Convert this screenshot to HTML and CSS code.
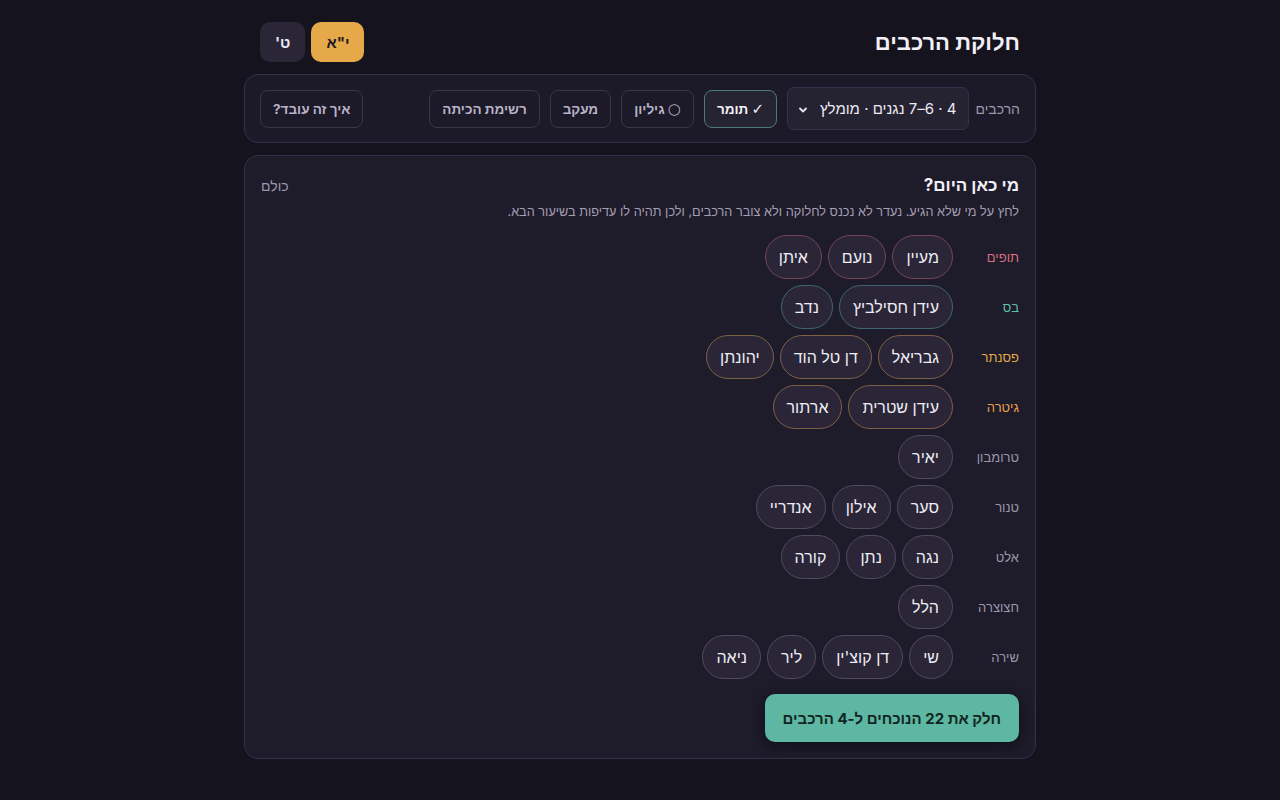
FILE: index.html
```html
<!DOCTYPE html>
<html lang="he" dir="rtl">
<head>
    <meta charset="UTF-8">
    <meta name="viewport" content="width=device-width, initial-scale=1.0">
    <title>חלוקת הרכבים</title>
    <link rel="stylesheet" href="styles.css">
</head>
<body>
    <div class="page">
        <header class="header">
            <h1>חלוקת הרכבים</h1>
            <div class="grades">
                <button class="grade active">י"א</button>
                <button class="grade">ט'</button>
            </div>
        </header>

        <div class="toolbar">
            <span class="toolbar-label">הרכבים</span>
            <div class="select">
                <span>4 · 6–7 נגנים · מומלץ</span>
                <svg width="10" height="10" viewBox="0 0 10 10"><path d="M2 3.5 L5 6.5 L8 3.5" fill="none" stroke="#e8e6f0" stroke-width="1.8" stroke-linecap="round" stroke-linejoin="round"/></svg>
            </div>
            <button class="tool active"><span class="mark">✓</span> תומר</button>
            <button class="tool"><span class="mark">○</span> גיליון</button>
            <button class="tool">מעקב</button>
            <button class="tool">רשימת הכיתה</button>
            <button class="tool help">איך זה עובד?</button>
        </div>

        <section class="card">
            <div class="card-head">
                <h2>מי כאן היום?</h2>
                <span class="all">כולם</span>
            </div>
            <p class="hint">לחץ על מי שלא הגיע. נעדר לא נכנס לחלוקה ולא צובר הרכבים, ולכן תהיה לו עדיפות בשיעור הבא.</p>

            <div class="rows">
                <div class="row drums">
                    <span class="row-label">תופים</span>
                    <div class="chips">
                        <button class="chip">מעיין</button>
                        <button class="chip">נועם</button>
                        <button class="chip">איתן</button>
                    </div>
                </div>
                <div class="row bass">
                    <span class="row-label">בס</span>
                    <div class="chips">
                        <button class="chip">עידן חסילביץ</button>
                        <button class="chip">נדב</button>
                    </div>
                </div>
                <div class="row piano">
                    <span class="row-label">פסנתר</span>
                    <div class="chips">
                        <button class="chip">גבריאל</button>
                        <button class="chip">דן טל הוד</button>
                        <button class="chip">יהונתן</button>
                    </div>
                </div>
                <div class="row guitar">
                    <span class="row-label">גיטרה</span>
                    <div class="chips">
                        <button class="chip">עידן שטרית</button>
                        <button class="chip">ארתור</button>
                    </div>
                </div>
                <div class="row">
                    <span class="row-label">טרומבון</span>
                    <div class="chips">
                        <button class="chip">יאיר</button>
                    </div>
                </div>
                <div class="row">
                    <span class="row-label">טנור</span>
                    <div class="chips">
                        <button class="chip">סער</button>
                        <button class="chip">אילון</button>
                        <button class="chip">אנדריי</button>
                    </div>
                </div>
                <div class="row">
                    <span class="row-label">אלט</span>
                    <div class="chips">
                        <button class="chip">נגה</button>
                        <button class="chip">נתן</button>
                        <button class="chip">קורה</button>
                    </div>
                </div>
                <div class="row">
                    <span class="row-label">חצוצרה</span>
                    <div class="chips">
                        <button class="chip">הלל</button>
                    </div>
                </div>
                <div class="row">
                    <span class="row-label">שירה</span>
                    <div class="chips">
                        <button class="chip">שי</button>
                        <button class="chip">דן קוצ'ין</button>
                        <button class="chip">ליר</button>
                        <button class="chip">ניאה</button>
                    </div>
                </div>
            </div>

            <div class="actions">
                <button class="split">חלק את 22 הנוכחים ל-4 הרכבים</button>
            </div>
        </section>
    </div>
</body>
</html>
```

FILE: styles.css
```css
body {
    margin: 0;
    background-color: #15131e;
    color: #e8e6f0;
    font-family: Inter, "Noto Sans", sans-serif;
}

button {
    font-family: inherit;
    cursor: pointer;
}

.page {
    width: 792px;
    margin: 0 auto;
    padding: 22px 0;
}

.header {
    display: flex;
    justify-content: space-between;
    align-items: center;
    height: 40px;
    padding: 0 16px;
}

h1 {
    margin: 0;
    font-size: 22px;
    font-weight: 700;
    color: #f2f0f7;
}

.grades {
    display: flex;
    gap: 6px;
}

.grade {
    height: 40px;
    padding: 0 15px;
    border: none;
    border-radius: 10px;
    background-color: #2a2638;
    color: #e8e6f0;
    font-size: 15px;
    font-weight: 700;
}

.grade.active {
    background-color: #e6a94a;
    color: #1d1720;
}

.toolbar {
    margin-top: 12px;
    display: flex;
    align-items: center;
    gap: 10px;
    padding: 12px 15px;
    border: 1px solid #35314a;
    border-radius: 14px;
    background-color: #1c1928;
}

.toolbar-label {
    font-size: 14px;
    color: #9c97aa;
    margin-left: -4px;
}

.select {
    display: flex;
    align-items: center;
    gap: 12px;
    height: 43px;
    box-sizing: border-box;
    padding: 0 12px 0 10px;
    border: 1px solid #35314a;
    border-radius: 7px;
    background-color: #252232;
    font-size: 15px;
    color: #ece9f3;
}

.select svg {
    margin-top: 2px;
}

.tool {
    height: 38px;
    padding: 0 12px;
    border: 1px solid #3a3548;
    border-radius: 8px;
    background-color: transparent;
    color: #b8b3c6;
    font-size: 13.5px;
    font-weight: 700;
}

.tool .mark {
    font-family: "DejaVu Sans", sans-serif;
    font-weight: 400;
    font-size: 15px;
}

.tool.active {
    border-color: #4e7a78;
    background-color: #262333;
    color: #f4f2f8;
}

.tool.help {
    margin-inline-start: auto;
}

.card {
    margin-top: 12px;
    padding: 16px;
    border: 1px solid #35314a;
    border-radius: 14px;
    background-color: #1e1b2a;
}

.card-head {
    display: flex;
    justify-content: space-between;
    align-items: center;
}

h2 {
    margin: 0;
    font-size: 17px;
    font-weight: 700;
    line-height: 26px;
    color: #f2f0f7;
}

.all {
    font-size: 14px;
    color: #9c97aa;
}

.hint {
    margin: 4px 0 13px;
    font-size: 12.7px;
    line-height: 20px;
    color: #a39eb2;
}

.rows {
    display: flex;
    flex-direction: column;
    gap: 6px;
}

.row {
    display: flex;
    align-items: center;
    gap: 8px;
}

.row-label {
    width: 58px;
    font-size: 13px;
    color: #9c97aa;
}

.chips {
    display: flex;
    gap: 6px;
}

.chip {
    height: 44px;
    padding: 0 13px;
    border: 1px solid #4f4a5e;
    border-radius: 22px;
    background-color: #2a2637;
    color: #eeecf4;
    font-size: 16px;
}

.drums .row-label { color: #d8707f; }
.drums .chip { border-color: #73465a; }
.bass .row-label { color: #5fbfa8; }
.bass .chip { border-color: #3f6570; }
.piano .row-label { color: #e3a94c; }
.piano .chip { border-color: #7e6045; }
.guitar .row-label { color: #e8a04c; }
.guitar .chip { border-color: #7e6045; }

.actions {
    display: flex;
    margin-top: 15px;
}

.split {
    height: 48px;
    padding: 0 18px;
    border: none;
    border-radius: 10px;
    background-color: #5db7a2;
    color: #122420;
    font-size: 15px;
    font-weight: 700;
    box-shadow: 0 4px 14px rgba(0, 0, 0, 0.45);
}
```
